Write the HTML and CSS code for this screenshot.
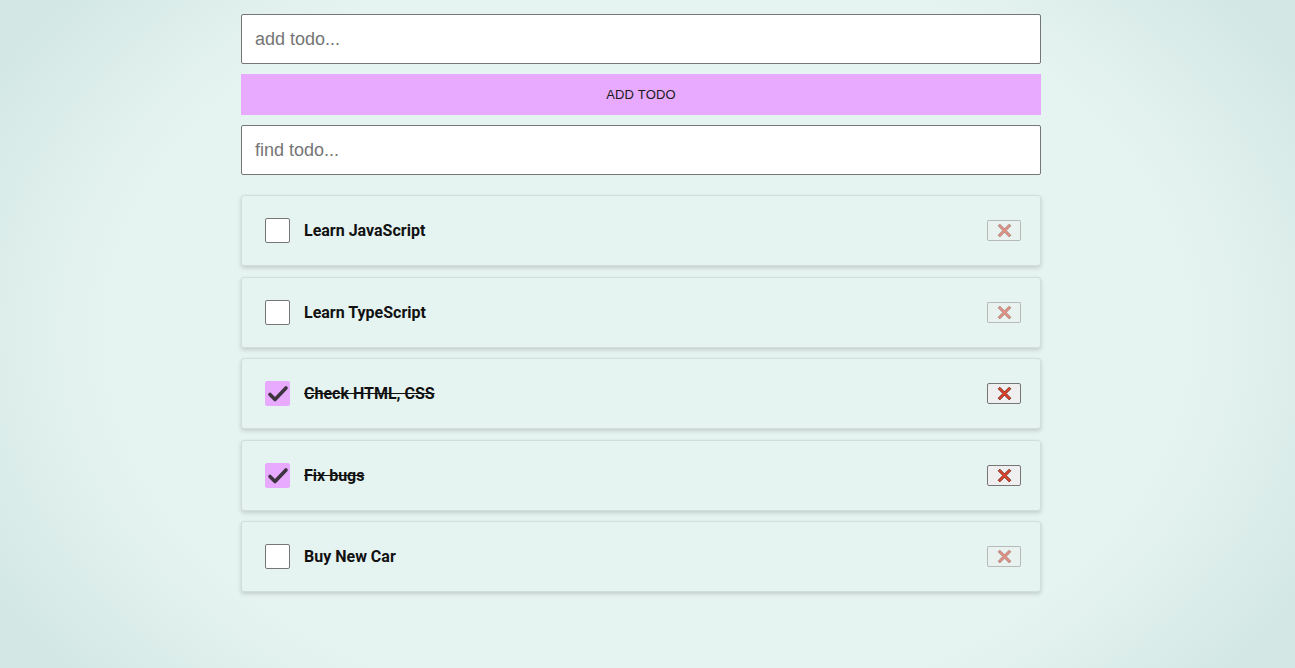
FILE: index.html
```html
<!DOCTYPE html>
<html>
<head>
<meta charset="utf-8">
<link rel="stylesheet" href="styles.css">
</head>
<body>
<main class="app">
  <form class="add-form">
    <input class="field" type="text" placeholder="add todo...">
    <button class="add-btn" type="button">ADD TODO</button>
  </form>
  <input class="field" type="text" placeholder="find todo...">
  <ul class="list">
    <li class="item">
      <span class="check"></span>
      <span class="title">Learn JavaScript</span>
      <button class="del" disabled><svg class="x" viewBox="0 0 16 16"><path d="M3 1.2 8 6.2 13 1.2 14.8 3 9.8 8 14.8 13 13 14.8 8 9.8 3 14.8 1.2 13 6.2 8 1.2 3Z"/></svg></button>
    </li>
    <li class="item">
      <span class="check"></span>
      <span class="title">Learn TypeScript</span>
      <button class="del" disabled><svg class="x" viewBox="0 0 16 16"><path d="M3 1.2 8 6.2 13 1.2 14.8 3 9.8 8 14.8 13 13 14.8 8 9.8 3 14.8 1.2 13 6.2 8 1.2 3Z"/></svg></button>
    </li>
    <li class="item done">
      <span class="check on"><svg class="tick" viewBox="0 0 25 25"><path d="M5 13.5 10 18.5 21 7"/></svg></span>
      <span class="title">Check HTML, CSS</span>
      <button class="del"><svg class="x" viewBox="0 0 16 16"><path d="M3 1.2 8 6.2 13 1.2 14.8 3 9.8 8 14.8 13 13 14.8 8 9.8 3 14.8 1.2 13 6.2 8 1.2 3Z"/></svg></button>
    </li>
    <li class="item done">
      <span class="check on"><svg class="tick" viewBox="0 0 25 25"><path d="M5 13.5 10 18.5 21 7"/></svg></span>
      <span class="title">Fix bugs</span>
      <button class="del"><svg class="x" viewBox="0 0 16 16"><path d="M3 1.2 8 6.2 13 1.2 14.8 3 9.8 8 14.8 13 13 14.8 8 9.8 3 14.8 1.2 13 6.2 8 1.2 3Z"/></svg></button>
    </li>
    <li class="item">
      <span class="check"></span>
      <span class="title">Buy New Car</span>
      <button class="del" disabled><svg class="x" viewBox="0 0 16 16"><path d="M3 1.2 8 6.2 13 1.2 14.8 3 9.8 8 14.8 13 13 14.8 8 9.8 3 14.8 1.2 13 6.2 8 1.2 3Z"/></svg></button>
    </li>
  </ul>
</main>
</body>
</html>
```
FILE: styles.css
```css
* { box-sizing: border-box; }
html, body { height: 100%; }
body {
  margin: 0;
  padding-right: 13px;
  font-family: Roboto, "Liberation Sans", Arial, sans-serif;
  background-color: #e6f4f1;
  background-image: radial-gradient(ellipse 58% 80% at 50% 50%, #e6f4f1 0%, #e6f4f1 72%, #d3e7e4 100%);
  overflow: hidden;
}
.app {
  width: 800px;
  margin: 0 auto;
  padding-top: 14px;
  display: flex;
  flex-direction: column;
}
.add-form {
  display: flex;
  flex-direction: column;
  gap: 10px;
  margin: 0 0 10px;
}
.field {
  display: block;
  width: 100%;
  height: 50px;
  border: 1px solid #767676;
  border-radius: 2px;
  background: #fff;
  padding: 0 13px;
  font-family: "Liberation Sans", Arial, sans-serif;
  font-size: 18px;
  color: #222;
  outline: none;
}
.field::placeholder { color: #757575; }
.add-btn {
  height: 41px;
  border: none;
  background: #e8aaff;
  font-family: "Liberation Sans", Arial, sans-serif;
  font-size: 13px;
  color: #1a1a1a;
  letter-spacing: 0.2px;
  padding: 0;
}
.list {
  list-style: none;
  margin: 20px 0 0;
  padding: 0;
  display: flex;
  flex-direction: column;
  gap: 10.25px;
}
.item {
  height: 71.25px;
  display: flex;
  align-items: center;
  padding: 0 19px 0 23px;
  background: #e6f4f1;
  border: 1px solid #d2dedb;
  border-radius: 3px;
  box-shadow: 0 2px 4px rgba(0, 0, 0, 0.16);
}
.check {
  width: 25px;
  height: 25px;
  border: 1px solid #767676;
  border-radius: 2px;
  background: #fff;
  flex: none;
  display: flex;
  align-items: center;
  justify-content: center;
}
.check.on {
  background: #e8aaff;
  border-color: #e8aaff;
}
.tick {
  width: 25px;
  height: 25px;
  flex: none;
  fill: none;
  stroke: #3d3440;
  stroke-width: 3.6;
  stroke-linecap: round;
  stroke-linejoin: round;
}
.title {
  margin-left: 14px;
  font-weight: 700;
  font-size: 16px;
  color: #111;
  flex: 1;
}
.done .title { text-decoration: line-through; }
.del {
  width: 34px;
  height: 21px;
  border: 1px solid #767676;
  border-radius: 2px;
  background: #efefef;
  padding: 0;
  display: flex;
  align-items: center;
  justify-content: center;
}
.del[disabled] {
  border-color: rgba(118, 118, 118, 0.45);
  background: rgba(239, 239, 239, 0.45);
}
.x {
  width: 15px;
  height: 15px;
  fill: #e0432a;
  stroke: #5a1a10;
  stroke-width: 0.8;
  stroke-linejoin: round;
}
.del[disabled] .x { opacity: 0.55; }
```
